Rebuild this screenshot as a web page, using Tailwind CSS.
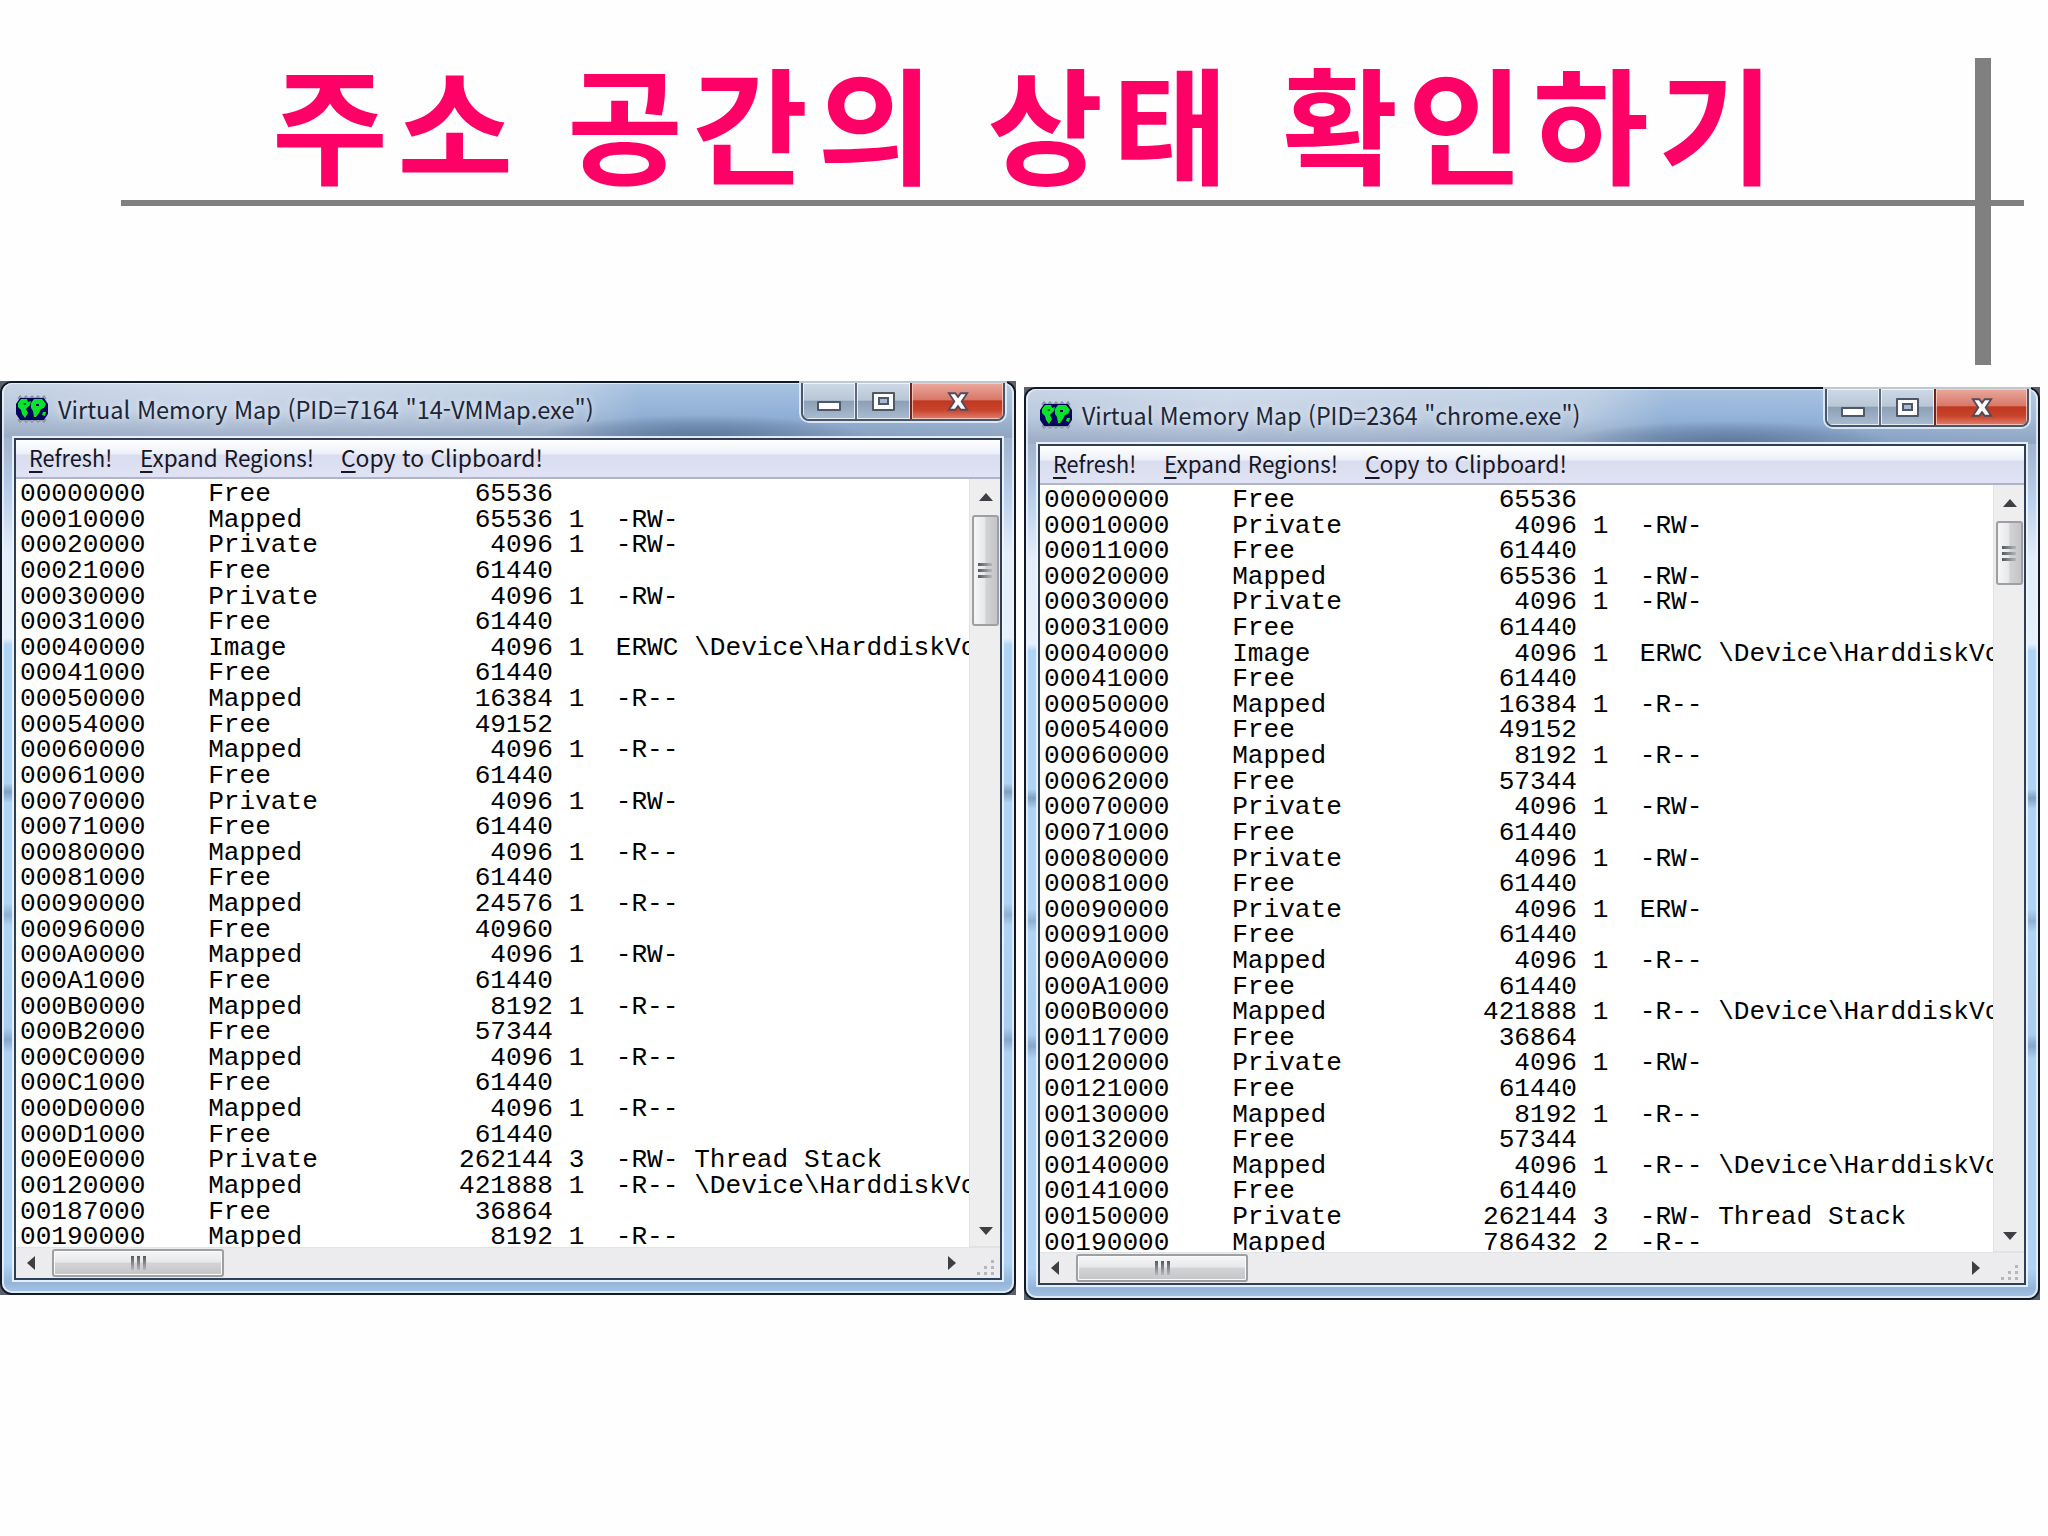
<!DOCTYPE html>
<html lang="ko">
<head>
<meta charset="utf-8">
<title>주소 공간의 상태 확인하기</title>
<script src="https://cdn.jsdelivr.net/npm/@tailwindcss/browser@4"></script>
</head>
<body class="bg-[#fefefe] overflow-hidden">
<div class="relative w-[2048px] h-[1536px] overflow-hidden">
  <header class="h-[381px] pt-[25px] pl-[272px]">
    <h1 id="title" class="w-max whitespace-pre font-bold text-[126px] leading-[190px] tracking-[9.3px] text-[#ff0066] font-['Noto_Sans_CJK_KR',sans-serif]">주소 공간의 상태 확인하기</h1>
  </header>
  <div class="absolute left-[121px] top-[200px] w-[1903px] h-[6px] bg-[#808080]"></div>
  <div class="absolute left-[1975px] top-[58px] w-[16px] h-[307px] bg-[#808080]"></div>
  <main id="windows" class="flex items-start gap-[8px]"></main>
</div>

<script>
const left = `00000000    Free             65536
00010000    Mapped           65536 1  -RW-
00020000    Private           4096 1  -RW-
00021000    Free             61440
00030000    Private           4096 1  -RW-
00031000    Free             61440
00040000    Image             4096 1  ERWC \\Device\\HarddiskVo
00041000    Free             61440
00050000    Mapped           16384 1  -R--
00054000    Free             49152
00060000    Mapped            4096 1  -R--
00061000    Free             61440
00070000    Private           4096 1  -RW-
00071000    Free             61440
00080000    Mapped            4096 1  -R--
00081000    Free             61440
00090000    Mapped           24576 1  -R--
00096000    Free             40960
000A0000    Mapped            4096 1  -RW-
000A1000    Free             61440
000B0000    Mapped            8192 1  -R--
000B2000    Free             57344
000C0000    Mapped            4096 1  -R--
000C1000    Free             61440
000D0000    Mapped            4096 1  -R--
000D1000    Free             61440
000E0000    Private         262144 3  -RW- Thread Stack
00120000    Mapped          421888 1  -R-- \\Device\\HarddiskVo
00187000    Free             36864
00190000    Mapped            8192 1  -R--`;
const right = `00000000    Free             65536
00010000    Private           4096 1  -RW-
00011000    Free             61440
00020000    Mapped           65536 1  -RW-
00030000    Private           4096 1  -RW-
00031000    Free             61440
00040000    Image             4096 1  ERWC \\Device\\HarddiskVo
00041000    Free             61440
00050000    Mapped           16384 1  -R--
00054000    Free             49152
00060000    Mapped            8192 1  -R--
00062000    Free             57344
00070000    Private           4096 1  -RW-
00071000    Free             61440
00080000    Private           4096 1  -RW-
00081000    Free             61440
00090000    Private           4096 1  ERW-
00091000    Free             61440
000A0000    Mapped            4096 1  -R--
000A1000    Free             61440
000B0000    Mapped          421888 1  -R-- \\Device\\HarddiskVo
00117000    Free             36864
00120000    Private           4096 1  -RW-
00121000    Free             61440
00130000    Mapped            8192 1  -R--
00132000    Free             57344
00140000    Mapped            4096 1  -R-- \\Device\\HarddiskVo
00141000    Free             61440
00150000    Private         262144 3  -RW- Thread Stack
00190000    Mapped          786432 2  -R--`;

const win = (o) => `
<section class="${o.shell}">
  <div class="flex flex-col h-full rounded-[12px] border-2 border-[#111a26] bg-[linear-gradient(#a3b6cf_0px,#a3b6cf_60px,#b9cfea_110px,#e4eefb_170px,#e6f0fd_255px,#b0d4f5_262px,#b0d4f5_400px,#7d9fc0_409px,#b0d4f5_420px,#b0d4f5_520px,#8fb0d2_532px,#b0d4f5_543px,#aacdf0_645px,#86a6cb_657px,#aed0f3_669px,#b0d2f5_880px,#94b5da_900px,#a9c5e4_910px)] overflow-hidden">
    <div class="h-[55px] shrink-0 bg-[linear-gradient(90deg,#bac9de_0px,#c6d3e6_200px,#bdcde2_440px,#b6c9e0_560px,#93b3d8_640px,#93b3d9_790px,#a5bdd8_1000px)]">
      <div class="flex h-full items-start justify-between pl-[13px] pr-[11px] bg-[linear-gradient(180deg,rgba(255,255,255,.2)_0%,rgba(255,255,255,0)_50%,rgba(120,140,170,.45)_94%),radial-gradient(ellipse_170px_24px_at_700px_56px,rgba(50,80,120,.85),rgba(50,80,120,0))]">
        <div class="flex items-center h-[52px]">
          <svg class="w-[34px] h-[28px]" viewBox="0 0 34 28"><path d="M3 4l2-3 3 3 3-3 3 3 3-3 3 3 3-3 3 3 3-3 2 3M3 24l2 3 3-3 3 3 3-3 3 3 3-3 3 3 3-3 3 3 2-3" fill="none" stroke="#8a95a6" stroke-width="1.5"/><path d="M5 3h24l4 6v10l-4 6H5l-4-6V9z" fill="#04045e"/><path d="M6 4h6l1 3 3-1-1 4-4 4 2 4-3 5-3-4-1-4-3-3V8zM19 4h8l4 5-2 4-3 1-2 4-3 4-2 0-1-6-2-3v-5zM28 17h3l-1 4-3-1z" fill="#0be32a"/><path d="M8 9l3-1v2zM21 9h3v2h-3z" fill="#04045e"/></svg>
          <span data-w="${o.titleW}" class="ml-[9px] inline-block origin-left whitespace-pre text-[24px] leading-[30px] text-[#1c2638] font-['Noto_Sans_CJK_KR',sans-serif] [text-shadow:0_0_8px_rgba(255,255,255,.8)]">${o.title}</span>
        </div>
        <div class="absolute ${o.btnLeft} flex h-[38px] border-2 border-t-0 border-[#46566c] rounded-b-[8px] overflow-hidden shadow-[0_0_0_2px_rgba(235,243,250,.8)]">
          <div class="flex items-center justify-center w-[54px] border-r-2 border-[#5c6b80] bg-[linear-gradient(#cdd9e6_0%,#b9c6d5_48%,#8b9fb6_50%,#a9bccf_100%)] shadow-[inset_0_0_0_1px_rgba(255,255,255,.7)]"><i class="mt-[9px] block w-[24px] h-[10px] border-2 border-[#4e586a] bg-white rounded-[1px]"></i></div>
          <div class="flex items-center justify-center w-[53px] bg-[linear-gradient(#cdd9e6_0%,#b9c6d5_48%,#8b9fb6_50%,#a9bccf_100%)] shadow-[inset_0_0_0_1px_rgba(255,255,255,.7)]"><i class="flex items-center justify-center w-[23px] h-[19px] border-2 border-[#4e586a] bg-white rounded-[1px]"><b class="block w-[11px] h-[8px] border-2 border-[#4e586a] bg-[#a9b8ca]"></b></i></div>
          <div class="flex items-center justify-center w-[93px] border-l-2 border-[#6d2522] bg-[linear-gradient(#eaa99c_0%,#d8786a_46%,#bf3720_50%,#c9432a_75%,#dd8070_100%)] shadow-[inset_0_0_0_1px_rgba(255,220,210,.7)]"><svg class="w-[22px] h-[19px]" viewBox="0 0 24 20"><path d="M2 1h7l3 4 3-4h7l-6 9 6 9h-7l-3-4-3 4H2l6-9z" fill="#fff" stroke="#544a58" stroke-width="2"/></svg></div>
        </div>
      </div>
    </div>
    <div class="flex flex-col flex-1 min-h-0 mx-[12px] mb-[13px] border-2 border-[#2e3f56] bg-white shadow-[0_0_0_2px_rgba(238,245,252,.9)]">
      <nav class="flex h-[39px] shrink-0 items-center pl-[13px] pb-[3px] border-b-2 border-[#b1b4c9] text-[23px] leading-[30px] text-[#161625] font-['Noto_Sans_CJK_KR',sans-serif] bg-[linear-gradient(#ffffff_0%,#eef1fa_36%,#d9ddef_42%,#dfe3f3_100%)]">
        <span class="block w-[111px]"><span data-w="83" class="inline-block origin-left whitespace-pre"><u class="underline-offset-4 decoration-2">R</u>efresh!</span></span>
        <span class="block w-[201px]"><span data-w="174" class="inline-block origin-left whitespace-pre"><u class="underline-offset-4 decoration-2">E</u>xpand Regions!</span></span>
        <span class="block"><span data-w="202" class="inline-block origin-left whitespace-pre"><u class="underline-offset-4 decoration-2">C</u>opy to Clipboard!</span></span>
      </nav>
      <div class="flex min-h-0 flex-1">
        <pre class="${o.pre}">${o.text}</pre>
        <div class="flex w-[31px] shrink-0 flex-col items-center bg-[#eeeeef] border-l border-[#e2e3e6]">
          <div class="flex h-[36px] w-full shrink-0 items-center justify-center pl-[2px]"><svg class="w-[14px] h-[8px]" viewBox="0 0 14 8"><path d="M7 0l7 8H0z" fill="#3d3f43"/></svg></div>
          <div class="${o.thumb}"><i class="block w-[14px] h-[3px] bg-[linear-gradient(90deg,#55585c,#b5b8bc)]"></i><i class="block w-[14px] h-[3px] bg-[linear-gradient(90deg,#55585c,#b5b8bc)]"></i><i class="block w-[14px] h-[3px] bg-[linear-gradient(90deg,#55585c,#b5b8bc)]"></i></div>
          <div class="mt-auto flex h-[32px] w-full shrink-0 items-center justify-center pl-[2px] border-b border-[#e0e1e4]"><svg class="w-[14px] h-[8px]" viewBox="0 0 14 8"><path d="M7 8l7-8H0z" fill="#3d3f43"/></svg></div>
        </div>
      </div>
      <div class="flex h-[31px] shrink-0 items-center bg-[#ececee] border-t border-[#e2e3e5]">
        <div class="flex h-full w-[36px] items-center pl-[11px]"><svg class="w-[8px] h-[14px]" viewBox="0 0 8 14"><path d="M0 7l8-7v14z" fill="#3d3f43"/></svg></div>
        <div class="flex h-[28px] w-[172px] items-center justify-center gap-[3px] rounded-[3px] border-2 border-[#9d9fa2] bg-[linear-gradient(#f6f6f7_0%,#e8e9ea_45%,#d2d3d5_52%,#c3c5c8_100%)] shadow-[inset_0_0_0_1px_#fbfbfb]"><i class="block w-[3px] h-[14px] bg-[linear-gradient(#55585c,#b5b8bc)]"></i><i class="block w-[3px] h-[14px] bg-[linear-gradient(#55585c,#b5b8bc)]"></i><i class="block w-[3px] h-[14px] bg-[linear-gradient(#55585c,#b5b8bc)]"></i></div>
        <div class="ml-auto flex h-full w-[52px] items-center"><svg class="w-[8px] h-[14px]" viewBox="0 0 8 14"><path d="M8 7L0 0v14z" fill="#3d3f43"/></svg></div>
        <svg class="w-[22px] h-[30px] -ml-[27px] mr-[5px]" viewBox="0 0 22 30" fill="#b4b7bc"><path d="M18 12h3v3h-3zM11 18h3v3h-3zM18 18h3v3h-3zM4 24h3v3H4zM11 24h3v3h-3zM18 24h3v3h-3z"/></svg>
      </div>
    </div>
  </div>
  <div class="pointer-events-none absolute inset-[2px] rounded-[10px] border-2 border-[#eef4fb]/80 border-t-[1px]"></div>
</section>`;

document.getElementById('windows').innerHTML = win({
  shell: "relative w-[1016px] h-[914px] bg-[#59616d]",
  btnLeft: "left-[801px] top-[2px] z-10",
  pre: "flex-1 min-w-0 overflow-hidden pl-[4px] pt-[3px] text-[26.13px] leading-[25.63px] text-black font-['Liberation_Mono',monospace]",
  thumb: "flex w-[27px] h-[111px] shrink-0 flex-col items-center justify-center gap-[3px] rounded-[3px] border-2 border-[#9d9fa2] bg-[linear-gradient(90deg,#f6f6f7_0%,#e8e9ea_45%,#d2d3d5_52%,#c3c5c8_100%)]",
  title: 'Virtual Memory Map (PID=7164 "14-VMMap.exe")', titleW: 536, text: left
}) + win({
  shell: "relative mt-[6px] w-[1016px] h-[913px] bg-[#59616d]",
  btnLeft: "left-[801px] top-[2px] z-10",
  pre: "flex-1 min-w-0 overflow-hidden pl-[4px] pt-[3px] text-[26.13px] leading-[25.61px] text-black font-['Liberation_Mono',monospace]",
  thumb: "flex w-[27px] h-[64px] shrink-0 flex-col items-center justify-center gap-[3px] rounded-[3px] border-2 border-[#9d9fa2] bg-[linear-gradient(90deg,#f6f6f7_0%,#e8e9ea_45%,#d2d3d5_52%,#c3c5c8_100%)]",
  title: 'Virtual Memory Map (PID=2364 "chrome.exe")', titleW: 498, text: right
});

// Captions and menu labels are condensed to their nominal widths.
function fit() {
  document.querySelectorAll('[data-w]').forEach(e => {
    e.style.transform = 'scaleX(' + e.dataset.w / e.offsetWidth + ')';
  });
}
fit();
window.addEventListener('load', fit);
document.fonts.ready.then(fit);
</script>
</body>
</html>
